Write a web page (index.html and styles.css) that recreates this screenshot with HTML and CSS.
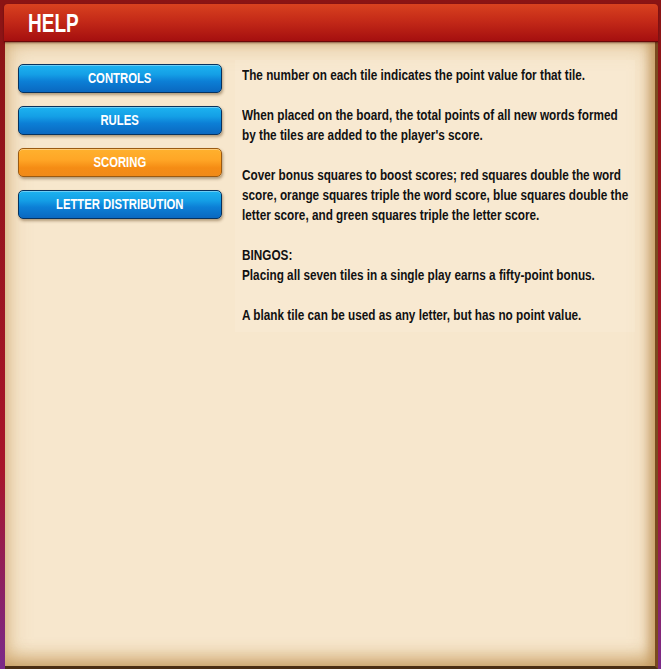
FILE: index.html
```
<!DOCTYPE html>
<html>
<head>
<meta charset="utf-8">
<link rel="stylesheet" href="styles.css">
</head>
<body>
<div class="stage">
  <div class="dialog">
    <div class="header"><span class="title">HELP</span></div>
    <div class="body">
      <nav class="menu">
        <button class="btn"><span class="label">CONTROLS</span></button>
        <button class="btn"><span class="label">RULES</span></button>
        <button class="btn active"><span class="label">SCORING</span></button>
        <button class="btn"><span class="label">LETTER DISTRIBUTION</span></button>
      </nav>
      <div class="content">
        <div class="text">
          <p>The number on each tile indicates the point value for that tile.</p>
          <p>When placed on the board, the total points of all new words formed by the tiles are added to the player's score.</p>
          <p>Cover bonus squares to boost scores; red squares double the word score, orange squares triple the word score, blue squares double the letter score, and green squares triple the letter score.</p>
          <p>BINGOS:<br>Placing all seven tiles in a single play earns a fifty-point bonus.</p>
          <p>A blank tile can be used as any letter, but has no point value.</p>
        </div>
      </div>
    </div>
  </div>
</div>
</body>
</html>
```
FILE: styles.css
```
html, body {
  margin: 0;
  padding: 0;
}
body {
  width: 661px;
  height: 669px;
  overflow: hidden;
  background: linear-gradient(180deg, #8a1414 0%, #a8152a 70%, #7a2a8a 100%);
  font-family: "Liberation Sans", Arial, sans-serif;
}
.stage {
  padding: 4px 3px 0 4px;
}
.dialog {
  display: flex;
  flex-direction: column;
  height: 665px;
}
.header {
  height: 37px;
  border-radius: 4px 4px 0 0;
  background: linear-gradient(180deg, #d8421f 0%, #c42a18 45%, #a50f0f 100%);
  border-bottom: 1px solid #6a0808;
  box-shadow: 0 1px 2px rgba(60,0,0,0.5);
  display: flex;
  align-items: center;
  padding-left: 24px;
  position: relative;
  z-index: 1;
}
.title {
  display: inline-block;
  color: #fff;
  font-weight: bold;
  font-size: 25px;
  transform: scaleX(0.76);
  transform-origin: left center;
  margin-top: 1px;
}
.body {
  flex: 1;
  margin-left: 1px;
  background: #f7e7cd;
  border-right: 3px solid #7a4a1e;
  border-bottom: 3px solid #4a2e14;
  box-shadow: inset 0 0 24px rgba(190,140,70,0.55), inset -6px 0 10px rgba(170,120,60,0.45), inset 0 -12px 14px rgba(190,140,70,0.35);
  display: flex;
  align-items: flex-start;
  padding: 22px 0 0 13px;
  overflow: hidden;
}
.menu {
  width: 204px;
  display: flex;
  flex-direction: column;
  gap: 13px;
  flex-shrink: 0;
}
.btn {
  height: 29px;
  border: 1px solid #07325e;
  border-radius: 5px;
  background: linear-gradient(180deg, #1db3f0 0%, #149fe6 35%, #0c7fd6 60%, #0a68c0 100%);
  box-shadow: inset 0 1px 0 rgba(255,255,255,0.35), 1px 2px 3px rgba(90,60,20,0.45);
  color: #fff;
  font-family: "Liberation Sans", Arial, sans-serif;
  font-weight: bold;
  font-size: 14.5px;
  padding: 0;
  margin: 0;
  display: flex;
  align-items: center;
  justify-content: center;
}
.label {
  display: inline-block;
  transform: scaleX(0.78);
  white-space: nowrap;
  margin-top: -1px;
}
.btn.active {
  border-color: #9a5a12;
  background: linear-gradient(180deg, #ffb12e 0%, #ffa626 40%, #f58c14 70%, #f08a18 100%);
}
.content {
  margin-left: 13px;
  margin-top: -4px;
  width: 400px;
  height: 272px;
  padding: 5px 0 0 7px;
  box-sizing: border-box;
  background: rgba(255,246,228,0.18);
  flex-shrink: 0;
}
.text {
  width: 462px;
  transform: scaleX(0.84);
  transform-origin: left top;
  color: #111;
  font-weight: bold;
  font-size: 14px;
  line-height: 20px;
}
.text p {
  margin: 0 0 20px 0;
}
```
